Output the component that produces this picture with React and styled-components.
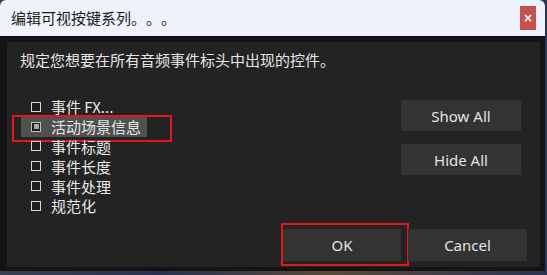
import React from "react";
import styled, { createGlobalStyle } from "styled-components";

const Global = createGlobalStyle`
  html, body { margin: 0; padding: 0; background: #2a2f3a; }
  body { width: 547px; height: 275px; overflow: hidden; }
  * { box-sizing: border-box; }
`;

const Screen = styled.div`
  width: 547px;
  height: 275px;
  background: linear-gradient(90deg, #3a3f52 0%, #2a3150 30%, #574a3a 60%, #2c3452 100%);
  display: flex;
  flex-direction: column;
`;

const Window = styled.div`
  width: 545px;
  height: 271px;
  background: #141414;
  border-radius: 6px 6px 0 0;
  overflow: hidden;
  display: flex;
  flex-direction: column;
`;

const TitleBar = styled.div`
  height: 37px;
  flex: none;
  background: #eef2fa;
  display: flex;
  align-items: center;
  justify-content: space-between;
  padding: 0 9px 0 11px;
  border-bottom: 1px solid #0a0a0a;
`;

const Title = styled.div`
  font-family: "Noto Sans CJK SC", "Noto Sans", sans-serif;
  font-size: 15px;
  color: #1b1b1b;
  line-height: 20px;
  text-spacing-trim: space-all;
`;

const CloseButton = styled.div`
  width: 16px;
  height: 24px;
  background: #c75050;
  color: #fff;
  display: flex;
  align-items: center;
  justify-content: center;
  font-family: "DejaVu Sans", sans-serif;
  font-size: 12px;
  font-weight: bold;
`;

const Frame = styled.div`
  flex: 1;
  padding: 5px 5px 4px 7px;
  display: flex;
`;

const Panel = styled.div`
  flex: 1;
  background: #232323;
  padding: 8px 13px 6px 13px;
  display: flex;
  flex-direction: column;
  font-family: "Noto Sans CJK SC", "Noto Sans", sans-serif;
`;

const Description = styled.div`
  font-size: 15px;
  line-height: 20px;
  color: #e6e6e6;
  white-space: nowrap;
  text-spacing-trim: space-all;
`;

const Middle = styled.div`
  flex: 1;
  margin-top: 27px;
  display: flex;
  justify-content: space-between;
`;

const List = styled.div`
  display: flex;
  flex-direction: column;
  align-items: flex-start;
  padding-left: 1px;
`;

const Row = styled.div`
  position: relative;
  height: 19.8px;
  display: inline-flex;
  align-items: center;
  gap: 10px;
  padding: 0 6px 0 10px;
  background: ${(p) => (p.$selected ? "#505050" : "transparent")};
  font-size: 15px;
  color: #e8e8e8;
  white-space: nowrap;
`;

const Check = styled.span`
  width: 10px;
  height: 10px;
  flex: none;
  border: 1.5px solid ${(p) => (p.$checked ? "#bdbdbd" : "#d8d8d8")};
  background: #1e1e1e;
  display: flex;
  align-items: center;
  justify-content: center;
  &::after {
    content: "";
    display: ${(p) => (p.$checked ? "block" : "none")};
    width: 5px;
    height: 5px;
    background: #a8a8a8;
  }
`;

const Marker = styled.div`
  position: absolute;
  border: 2px solid #e3161e;
  pointer-events: none;
`;

const RowMarker = styled(Marker)`
  left: -9px;
  top: -2px;
  width: 160px;
  height: 27px;
`;

const SideButtons = styled.div`
  display: flex;
  flex-direction: column;
  gap: 13px;
  padding: 3px 6px 0 0;
`;

const Button = styled.div`
  position: relative;
  width: ${(p) => p.$w || 120}px;
  height: ${(p) => p.$h || 31}px;
  background: #333333;
  color: #e4e4e4;
  display: flex;
  align-items: center;
  justify-content: center;
  font-family: "Noto Sans", "Open Sans", sans-serif;
  font-size: 15px;
`;

const ButtonMarker = styled(Marker)`
  left: -2px;
  top: -6px;
  width: 128px;
  height: 43px;
`;

const Footer = styled.div`
  display: flex;
  justify-content: flex-end;
  gap: 7px;
`;

const items = [
  { label: "事件 FX...", checked: false },
  { label: "活动场景信息", checked: true, selected: true },
  { label: "事件标题", checked: false },
  { label: "事件长度", checked: false },
  { label: "事件处理", checked: false },
  { label: "规范化", checked: false },
];

export default function App() {
  return (
    <>
      <Global />
      <Screen>
        <Window>
          <TitleBar>
            <Title>编辑可视按键系列。。。</Title>
            <CloseButton>×</CloseButton>
          </TitleBar>
          <Frame>
            <Panel>
              <Description>规定您想要在所有音频事件标头中出现的控件。</Description>
              <Middle>
                <List>
                  {items.map((it) => (
                    <Row key={it.label} $selected={it.selected}>
                      <Check $checked={it.checked} />
                      {it.label}
                      {it.selected && <RowMarker />}
                    </Row>
                  ))}
                </List>
                <SideButtons>
                  <Button>Show All</Button>
                  <Button>Hide All</Button>
                </SideButtons>
              </Middle>
              <Footer>
                <Button $w={118} $h={32}>
                  OK
                  <ButtonMarker />
                </Button>
                <Button $w={119} $h={32}>Cancel</Button>
              </Footer>
            </Panel>
          </Frame>
        </Window>
      </Screen>
    </>
  );
}
